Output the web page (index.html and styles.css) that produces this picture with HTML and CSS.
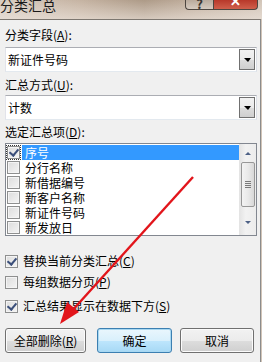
FILE: index.html
```html
<!DOCTYPE html>
<html lang="zh-CN">
<head>
    <meta charset="UTF-8">
    <title>分类汇总</title>
    <link rel="stylesheet" href="styles.css">
</head>
<body>
    <div class="titlebar">
        <span class="title">分类汇总</span>
        <div class="caption-btns">
            <span class="cap-btn help">?</span>
            <span class="cap-btn close">✕</span>
        </div>
    </div>

    <div class="dialog">
        <div class="label label-first">分类字段(<u>A</u>):</div>
        <div class="combo combo-first">
            <span class="combo-text">新证件号码</span>
            <span class="drop"><i></i></span>
        </div>

        <div class="label label-second">汇总方式(<u>U</u>):</div>
        <div class="combo combo-second">
            <span class="combo-text">计数</span>
            <span class="drop"><i></i></span>
        </div>

        <div class="label label-third">选定汇总项(<u>D</u>):</div>
        <div class="listbox">
            <div class="items">
                <div class="item selected"><span class="box checked focus"></span><span class="text">序号</span></div>
                <div class="item"><span class="box"></span><span class="text">分行名称</span></div>
                <div class="item"><span class="box"></span><span class="text">新借据编号</span></div>
                <div class="item"><span class="box"></span><span class="text">新客户名称</span></div>
                <div class="item"><span class="box"></span><span class="text">新证件号码</span></div>
                <div class="item"><span class="box"></span><span class="text">新发放日</span></div>
            </div>
            <div class="scrollbar">
                <span class="sb-arrow up"></span>
                <span class="sb-thumb"><i></i><i></i><i></i><i></i></span>
                <span class="sb-arrow down"></span>
            </div>
        </div>

        <div class="option opt-1"><span class="box checked"></span><span>替换当前分类汇总(<u>C</u>)</span></div>
        <div class="option opt-2"><span class="box"></span><span>每组数据分页(<u>P</u>)</span></div>
        <div class="option opt-3"><span class="box checked"></span><span>汇总结果显示在数据下方(<u>S</u>)</span></div>

        <div class="buttons">
            <button class="btn btn-remove">全部删除(<u>R</u>)</button>
            <button class="btn btn-ok">确定</button>
            <button class="btn btn-cancel">取消</button>
        </div>
    </div>

    <svg class="arrow" width="262" height="362" viewBox="0 0 262 362">
        <line x1="193" y1="177" x2="70" y2="313" stroke="#e2151b" stroke-width="2.4"/>
        <polygon points="60,324 79,312 67,302" fill="#e2151b"/>
    </svg>
</body>
</html>
```

FILE: styles.css
```css
body {
    margin: 0;
    width: 262px;
    height: 362px;
    overflow: hidden;
    position: relative;
    font-family: "Noto Sans CJK SC", "Noto Sans", sans-serif;
    font-size: 12px;
    color: #000;
    background: linear-gradient(90deg, #d7ccc1 0%, #c6b4a3 30%, #ad9a87 55%, #c2b09f 75%, #d2c5b8 100%);
}
u {
    text-decoration: underline;
    text-underline-offset: 1px;
}

/* title bar */
.titlebar {
    height: 19px;
    display: flex;
    justify-content: space-between;
    align-items: flex-start;
    background: linear-gradient(180deg, rgba(255,255,255,0) 0%, rgba(240,232,225,0.6) 100%);
}
.title {
    font-size: 14px;
    line-height: 16px;
    margin-top: -3px;
    color: #1a1a1a;
}
.caption-btns {
    display: flex;
    margin-right: 4px;
}
.cap-btn {
    height: 10px;
    box-sizing: border-box;
    border: 1px solid #4d4640;
    border-top: none;
    display: flex;
    justify-content: center;
    align-items: flex-end;
    overflow: hidden;
    line-height: 10px;
}
.help {
    width: 28px;
    border-radius: 0 0 0 4px;
    background: linear-gradient(180deg, #b9aa9c, #d6cbc0);
    color: #3a3530;
    font-size: 13px;
    font-weight: bold;
    border-right: none;
}
.close {
    width: 45px;
    border-radius: 0 0 4px 0;
    background: linear-gradient(180deg, #b8382a, #d0604c);
    color: #fff;
    font-size: 13px;
    font-weight: bold;
    padding-bottom: 3px;
}

/* dialog body */
.dialog {
    width: 252px;
    height: 342px;
    padding: 0 3px 0 5px;
    background: #f0f0f0;
    border-top: 1px solid #7d7770;
    border-right: 1px solid #8c8c8c;
    display: flex;
    flex-direction: column;
}
.label {
    line-height: 16px;
    height: 16px;
}
.label-first { margin-top: 7px; }
.label-second { margin-top: 5px; }
.label-third { margin-top: 4px; }

.combo {
    height: 25px;
    box-sizing: border-box;
    background: #fff;
    border: 1px solid #abadb3;
    border-color: #abadb3 #dbdfe6 #e3e9ef #e2e3ea;
    display: flex;
    align-items: center;
    justify-content: space-between;
}
.combo-first { margin-top: 4px; }
.combo-second { margin-top: 2px; }
.combo-text {
    padding-left: 2px;
    line-height: 16px;
}
.drop {
    width: 16px;
    height: 21px;
    box-sizing: border-box;
    margin-right: 1px;
    border: 1px solid #707070;
    background: linear-gradient(180deg, #f2f2f2 0%, #ebebeb 50%, #dddddd 51%, #cfcfcf 100%);
    display: flex;
    justify-content: center;
    align-items: center;
}
.drop i {
    width: 0;
    height: 0;
    border-left: 4px solid transparent;
    border-right: 3px solid transparent;
    border-top: 4px solid #000;
}

/* list with checkboxes */
.listbox {
    margin-top: 3px;
    height: 93px;
    box-sizing: border-box;
    background: #fff;
    border: 1px solid #828790;
    display: flex;
    overflow: hidden;
}
.items {
    flex: 1;
    padding-left: 1px;
    padding-top: 1px;
}
.item {
    height: 15px;
    display: flex;
    align-items: center;
}
.item .text {
    flex: 1;
    height: 15px;
    line-height: 15px;
    padding-left: 3px;
    margin-left: 2px;
    overflow: hidden;
}
.item.selected .text {
    background: #3399ff;
    color: #fff;
}
.box {
    width: 13px;
    height: 13px;
    box-sizing: border-box;
    border: 1px solid #8e8f8f;
    background: linear-gradient(135deg, #dcdcdc 0%, #f4f4f4 100%);
    box-shadow: inset 0 0 0 1px #f4f4f4;
    position: relative;
    flex-shrink: 0;
}
.box.checked::after {
    content: "";
    position: absolute;
    left: 3px;
    top: 0px;
    width: 4px;
    height: 7px;
    border: solid #3b4f7a;
    border-width: 0 2px 2px 0;
    transform: rotate(40deg);
}
.box.focus {
    outline: 1px dotted #333;
    outline-offset: 0;
}

.scrollbar {
    width: 17px;
    background: linear-gradient(90deg, #e3e3e3, #f2f2f2 40%, #ececec);
    display: flex;
    flex-direction: column;
    align-items: center;
}
.sb-arrow {
    width: 0;
    height: 0;
    border-left: 3px solid transparent;
    border-right: 3px solid transparent;
}
.sb-arrow.up {
    margin-top: 8px;
    border-bottom: 3px solid #4d6185;
}
.sb-arrow.down {
    margin-top: 14px;
    border-top: 3px solid #4d6185;
}
.sb-thumb {
    margin-top: 7px;
    width: 14px;
    height: 45px;
    box-sizing: border-box;
    border: 1px solid #979797;
    border-radius: 2px;
    background: linear-gradient(90deg, #f3f3f3, #e9e9e9 50%, #d8d8d8);
    display: flex;
    flex-direction: column;
    justify-content: center;
    align-items: center;
    gap: 1px;
}
.sb-thumb i {
    width: 6px;
    height: 1px;
    background: #7a7a7a;
}

/* options */
.option {
    height: 20px;
    display: flex;
    align-items: center;
    gap: 5px;
    line-height: 16px;
}
.opt-1 { margin-top: 15px; }
.opt-2 { margin-top: 1px; }
.opt-3 { margin-top: 4px; }

/* buttons */
.buttons {
    margin-top: 12px;
    display: flex;
}
.btn {
    height: 25px;
    box-sizing: border-box;
    font-family: "Noto Sans CJK SC", "Noto Sans", sans-serif;
    font-size: 12px;
    color: #000;
    border: 1px solid #707070;
    border-radius: 3px;
    background: linear-gradient(180deg, #f2f2f2 0%, #ebebeb 50%, #dddddd 51%, #cfcfcf 100%);
    box-shadow: inset 0 0 0 1px #fbfbfb;
    padding: 0;
    line-height: 16px;
}
.btn-remove { width: 81px; }
.btn-ok {
    width: 75px;
    margin-left: 11px;
    border-color: #3c7fb1;
    box-shadow: inset 0 0 0 1px #a8d8f2;
    background: linear-gradient(180deg, #eaf6fd 0%, #d9f0fc 50%, #bee6fd 51%, #a7d9f5 100%);
}
.btn-cancel {
    width: 74px;
    margin-left: 8px;
}

/* red annotation arrow */
.arrow {
    position: absolute;
    left: 0;
    top: 0;
    pointer-events: none;
}
```
